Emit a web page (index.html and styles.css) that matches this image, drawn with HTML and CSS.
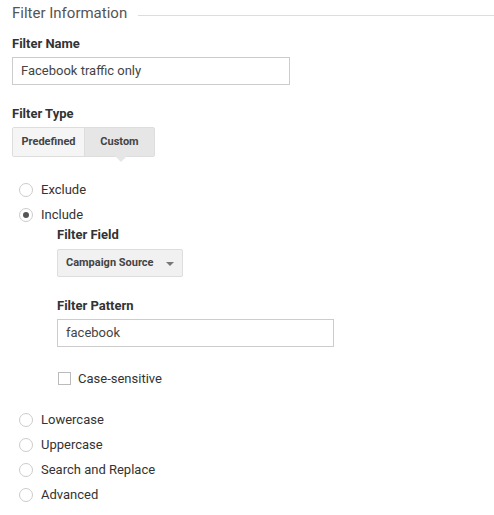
FILE: index.html
```html
<!DOCTYPE html>
<html>
<head>
<meta charset="utf-8">
<link rel="stylesheet" href="styles.css">
</head>
<body>
<div class="panel">
  <div class="section-title"><span>Filter Information</span><div class="rule"></div></div>

  <div class="label">Filter Name</div>
  <div class="textbox name-box">Facebook traffic only</div>

  <div class="label type-label">Filter Type</div>
  <div class="toggle">
    <div class="toggle-btn">Predefined</div>
    <div class="toggle-btn active">Custom</div>
  </div>

  <div class="options">
    <div class="radio-row"><span class="radio"></span>Exclude</div>
    <div class="radio-row"><span class="radio checked"></span>Include</div>
    <div class="sub">
      <div class="label">Filter Field</div>
      <div class="select">Campaign Source<span class="caret"></span></div>
      <div class="label pattern-label">Filter Pattern</div>
      <div class="textbox pattern-box">facebook</div>
      <div class="check-row"><span class="checkbox"></span>Case-sensitive</div>
    </div>
    <div class="radio-row lower"><span class="radio"></span>Lowercase</div>
    <div class="radio-row"><span class="radio"></span>Uppercase</div>
    <div class="radio-row"><span class="radio"></span>Search and Replace</div>
    <div class="radio-row"><span class="radio"></span>Advanced</div>
  </div>
</div>
</body>
</html>
```
FILE: styles.css
```css
* { box-sizing: border-box; }
body {
  margin: 0;
  background: #fff;
  font-family: Roboto, "Liberation Sans", sans-serif;
  color: #333;
}
.panel { padding: 4px 0 0 12px; }

.section-title {
  display: flex;
  align-items: center;
  gap: 11px;
  font-size: 15px;
  color: #555;
  height: 18px;
}
.section-title .rule {
  flex: 1;
  height: 1px;
  background: #ddd;
  margin-top: 4px;
}

.label {
  font-size: 13px;
  font-weight: bold;
  color: #333;
  margin-top: 14px;
  line-height: 16px;
}
.textbox {
  border: 1px solid #ccc;
  height: 28px;
  font-size: 13px;
  color: #444;
  padding-left: 8px;
  line-height: 26px;
}
.name-box { width: 278px; margin-top: 5px; }
.type-label { margin-top: 21px; }

.toggle {
  display: flex;
  margin-top: 5px;
  width: 143px;
  border: 1px solid #ddd;
  border-radius: 2px;
  height: 30px;
}
.toggle-btn {
  font-size: 11px;
  font-weight: bold;
  color: #444;
  line-height: 28px;
  text-align: center;
  background: #f5f5f5;
  width: 71px;
}
.toggle-btn.active {
  background: #e6e6e6;
  border-left: 1px solid #ddd;
  position: relative;
  flex: 1;
}
.toggle-btn.active::after {
  content: "";
  position: absolute;
  left: 30px;
  bottom: -6px;
  border-left: 6px solid transparent;
  border-right: 6px solid transparent;
  border-top: 6px solid #e6e6e6;
}

.options { margin-top: 20px; }
.radio-row {
  display: flex;
  align-items: center;
  height: 25px;
  font-size: 13px;
  color: #333;
  padding-left: 7px;
}
.radio {
  width: 14px;
  height: 14px;
  border: 1px solid #ccc;
  border-radius: 50%;
  margin-right: 8px;
  display: flex;
  align-items: center;
  justify-content: center;
}
.radio.checked::after {
  content: "";
  width: 6px;
  height: 6px;
  border-radius: 50%;
  background: #555;
}

.sub { padding-left: 45px; }
.sub .label { margin-top: -2px; padding-top: 2px; }
.select {
  margin-top: 6px;
  width: 126px;
  height: 28px;
  background: #f1f1f1;
  border: 1px solid #ddd;
  border-radius: 2px;
  font-size: 11px;
  font-weight: bold;
  color: #444;
  padding-left: 8px;
  line-height: 26px;
  position: relative;
}
.caret {
  position: absolute;
  right: 8px;
  top: 12px;
  border-left: 4px solid transparent;
  border-right: 4px solid transparent;
  border-top: 4px solid #777;
}
.sub .pattern-label { margin-top: 19px; }
.pattern-box { width: 277px; margin-top: 5px; }
.check-row {
  display: flex;
  align-items: center;
  margin-top: 24px;
  font-size: 13px;
  color: #333;
  padding-left: 1px;
  height: 14px;
}
.checkbox {
  width: 13px;
  height: 13px;
  border: 1px solid #bbb;
  margin-right: 7px;
}
.lower { margin-top: 22px; }
```
